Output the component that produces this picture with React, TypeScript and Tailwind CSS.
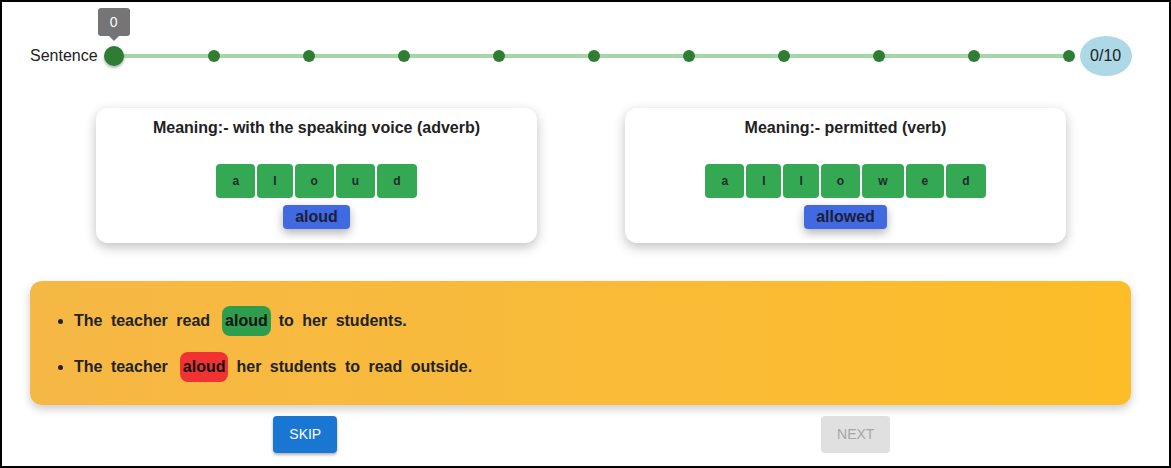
const dotOffsets = Array.from({ length: 10 }, (_, i) => 100 + i * 95);

function LetterTiles({ word }: { word: string }) {
  return (
    <div className="flex justify-center gap-[2px]">
      {word.split('').map((ch, i) => (
        <div
          key={i}
          className="h-[34px] px-4 flex items-center justify-center rounded-[4px] bg-[#34a853] text-[12px] font-bold text-[#1f2a2a]"
        >
          {ch}
        </div>
      ))}
    </div>
  );
}

function WordCard({ meaning, word }: { meaning: string; word: string }) {
  return (
    <div className="w-[441px] h-[135px] rounded-xl bg-white shadow-[0_4px_12px_rgba(0,0,0,0.25)] pt-[10px] flex flex-col items-center">
      <h3 className="text-[16px] leading-[20px] font-bold text-[#222]">{meaning}</h3>
      <div className="mt-[26px]">
        <LetterTiles word={word} />
      </div>
      <div className="mt-[7px] h-[24px] px-3 flex items-center rounded-[4px] bg-[#4169e1] text-[16px] font-bold text-[#1a2036] shadow-[0_4px_10px_rgba(0,0,0,0.3)]">
        {word}
      </div>
    </div>
  );
}

export default function App() {
  return (
    <div className="w-full h-[468px] border-2 border-black bg-white font-['Liberation_Sans',Arial,sans-serif] text-[#222] overflow-hidden">
      {/* Progress slider */}
      <div className="flex items-center pt-[34px] pl-[28px]">
        <span className="text-[16px] text-[#222]">Sentence</span>
        <div className="relative ml-[16px] w-[955px] h-[20px]">
          <div className="absolute left-0 right-0 top-[8px] h-[4px] bg-[#a5d6a7]" />
          {dotOffsets.map((x) => (
            <div
              key={x}
              className="absolute top-[4px] w-[12px] h-[12px] -ml-[6px] rounded-full bg-[#2e7d32]"
              style={{ left: `${x}px` }}
            />
          ))}
          <div className="absolute -left-[10px] top-0 w-[20px] h-[20px] rounded-full bg-[#2e7d32] shadow-[0_2px_3px_rgba(0,0,0,0.3)]" />
          <div className="absolute -left-[16px] -top-[38px] w-[32px] h-[28px] rounded-[3px] bg-[#757575] flex items-center justify-center text-[14px] text-white">
            0
            <div className="absolute left-[11px] -bottom-[5px] w-0 h-0 border-l-[5px] border-r-[5px] border-t-[5px] border-l-transparent border-r-transparent border-t-[#757575]" />
          </div>
        </div>
        <div className="ml-[11px] w-[52px] h-[40px] rounded-[50%] bg-[#add8e6] flex items-center justify-center text-[16px] text-[#222]">
          0/10
        </div>
      </div>

      {/* Word cards */}
      <div className="flex pl-[94px] gap-[88px] mt-[32px]">
        <WordCard meaning="Meaning:- with the speaking voice (adverb)" word="aloud" />
        <WordCard meaning="Meaning:- permitted (verb)" word="allowed" />
      </div>

      {/* Sentences */}
      <div className="ml-[28px] mt-[38px] w-[1101px] h-[124px] rounded-xl bg-linear-to-r from-[#f6b845] to-[#fcbd28] shadow-[0_4px_10px_rgba(0,0,0,0.2)] pt-[25px]">
        <ul className="list-disc pl-[44px] text-[16px] font-bold text-[#222] [word-spacing:4px]">
          <li className="h-[32px]">
            <span className="inline-flex items-center">
              The teacher read
              <span className="ml-[12px] mr-[8px] h-[30px] px-[3px] inline-flex items-center rounded-[8px] bg-[#2e9e4e] text-[#111]">aloud</span>
              to her students.
            </span>
          </li>
          <li className="mt-[14px] h-[32px]">
            <span className="inline-flex items-center">
              The teacher
              <span className="ml-[12px] mr-[8px] h-[30px] px-[3px] inline-flex items-center rounded-[8px] bg-[#f03232] text-[#111]">aloud</span>
              her students to read outside.
            </span>
          </li>
        </ul>
      </div>

      {/* Buttons */}
      <div className="ml-[28px] w-[1101px] grid grid-cols-2 mt-[11px]">
        <div className="flex justify-center">
          <button className="h-[37px] px-4 rounded-[4px] bg-[#1976d2] text-white text-[14px] uppercase shadow-[0_2px_3px_rgba(0,0,0,0.3)]">
            Skip
          </button>
        </div>
        <div className="flex justify-center">
          <button disabled className="h-[37px] px-4 rounded-[4px] bg-[#e0e0e0] text-[#a6a6a6] text-[14px] uppercase">
            Next
          </button>
        </div>
      </div>
    </div>
  );
}
